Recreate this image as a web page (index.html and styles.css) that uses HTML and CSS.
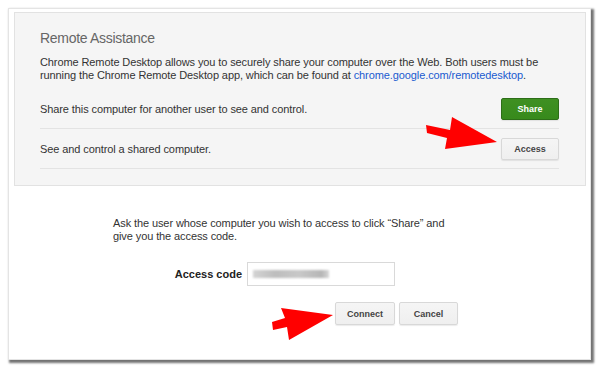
FILE: index.html
```html
<!DOCTYPE html>
<html>
<head>
<meta charset="utf-8">
<link rel="stylesheet" href="styles.css">
</head>
<body>
<div class="frame">
  <div class="card">
    <h1 class="title">Remote Assistance</h1>
    <p class="intro">Chrome Remote Desktop allows you to securely share your computer over the Web. Both users must be running the Chrome Remote Desktop app, which can be found at <a class="link" href="#">chrome.google.com/remotedesktop</a>.</p>
    <div class="row row-first">
      <span class="row-text">Share this computer for another user to see and control.</span>
      <button class="btn btn-green">Share</button>
    </div>
    <div class="row row-second">
      <span class="row-text">See and control a shared computer.</span>
      <button class="btn">Access</button>
    </div>
  </div>
  <div class="connect">
    <p class="ask">Ask the user whose computer you wish to access to click “Share” and give you the access code.</p>
    <div class="code-row">
      <label class="code-label">Access code</label>
      <div class="code-input"><span class="redacted"></span></div>
    </div>
    <div class="actions">
      <button class="btn btn-wide">Connect</button>
      <button class="btn btn-wide">Cancel</button>
    </div>
  </div>
</div>
<svg class="arrows" width="600" height="369" viewBox="0 0 600 369">
  <polygon fill="#f00" points="426,125 450,130 452,117 497,142 445,149 447,138 427,133"/>
  <polygon fill="#f00" points="272,322 285,318 281,308 333,315 289,340 287,327 273,330"/>
</svg>
</body>
</html>
```
FILE: styles.css
```css
* { box-sizing: border-box; }
html, body { margin: 0; padding: 0; background: #fff; }
body {
  font-family: "Liberation Sans", Arial, sans-serif;
  color: #333;
  position: relative;
  width: 600px;
  height: 369px;
  overflow: hidden;
}
.frame {
  margin: 8px 0 0 8px;
  width: 583px;
  height: 352px;
  border: 1px solid #e4e4e4;
  background: #fff;
  box-shadow: 2px 2px 2px 1px rgba(0,0,0,0.55);
  padding: 3px 4px 0 5px;
}
.card {
  background: #f5f5f5;
  border: 1px solid #e2e2e2;
  padding: 16px 26px 16px 25px;
}
.title {
  margin: 0;
  font-weight: normal;
  font-size: 14px;
  letter-spacing: -0.3px;
  line-height: 18px;
  color: #666;
}
.intro {
  margin: 9px 0 0;
  font-size: 11px;
  letter-spacing: -0.1px;
  line-height: 13px;
  color: #333;
}
.link { color: #1a5bd0; text-decoration: none; }
.row {
  display: flex;
  justify-content: space-between;
  align-items: center;
  border-bottom: 1px solid #e3e3e3;
  font-size: 11px;
  letter-spacing: -0.1px;
  line-height: 13px;
}
.row-first { padding: 16px 0 8px; }
.row-second { padding: 9px 0 8px; }
.btn {
  font-family: "Liberation Sans", Arial, sans-serif;
  font-weight: bold;
  font-size: 9px;
  color: #444;
  width: 58px;
  height: 22px;
  padding: 0;
  border: 1px solid #d8d8d8;
  border-radius: 2px;
  background: linear-gradient(#f5f5f5, #efefef);
  box-shadow: 0 1px 1px rgba(0,0,0,0.08);
}
.btn-green {
  color: #fff;
  background: linear-gradient(#3f9022, #378a1c);
  border-color: #2d6e18;
}
.connect {
  padding: 31px 0 0 99px;
}
.ask {
  margin: 0;
  width: 345px;
  font-size: 11px;
  letter-spacing: -0.1px;
  line-height: 13px;
  color: #333;
}
.code-row {
  display: flex;
  align-items: center;
  gap: 5px;
  margin-top: 19px;
}
.code-label {
  width: 129px;
  text-align: right;
  font-weight: bold;
  font-size: 11px;
  color: #222;
}
.code-input {
  width: 148px;
  height: 24px;
  border: 1px solid #d9d9d9;
  background: #fff;
  display: flex;
  align-items: center;
  padding-left: 5px;
}
.redacted {
  display: block;
  width: 76px;
  height: 8px;
  background: linear-gradient(90deg, #d4d4d4, #bdbdbd 30%, #c8c8c8 60%, #b6b6b6 90%, #d6d6d6);
  filter: blur(0.8px);
}
.actions {
  display: flex;
  gap: 4px;
  margin: 16px 0 0 222px;
}
.btn-wide { width: 60px; height: 23px; }
.btn-wide + .btn-wide { width: 59px; }
.arrows {
  position: absolute;
  left: 0;
  top: 0;
  pointer-events: none;
}
```
